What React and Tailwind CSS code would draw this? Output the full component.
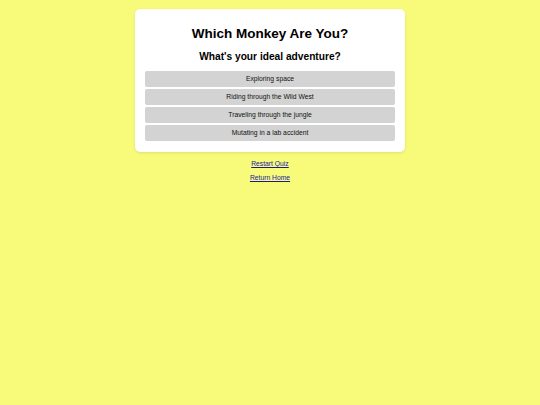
export default function App() {
  const options = [
    "Exploring space",
    "Riding through the Wild West",
    "Traveling through the jungle",
    "Mutating in a lab accident",
  ];
  return (
    <div className="min-h-[405px] w-full bg-[#f7fb79] flex flex-col items-center pt-[9px]" style={{ fontFamily: '"Liberation Sans", Arial, sans-serif' }}>
      <div className="w-[270px] bg-white rounded-[5px] shadow-[0_1px_3px_rgba(0,0,0,0.1)] px-[10px] pt-[17px] pb-[11px] flex flex-col items-center">
        <h1 className="text-[13.5px] font-bold leading-[16px] text-black">Which Monkey Are You?</h1>
        <h2 className="text-[10.2px] font-bold leading-[12px] text-black mt-[9px] mb-[8px]">What's your ideal adventure?</h2>
        <div className="w-full flex flex-col gap-[2px]">
          {options.map((o) => (
            <button key={o} className="w-full h-[16px] bg-[#d3d3d3] rounded-[2px] text-[6.75px] leading-[16px] text-[#111] text-center">
              {o}
            </button>
          ))}
        </div>
      </div>
      <div className="mt-[7px] flex flex-col items-center gap-[5px]">
        <a href="#" className="text-[6.75px] leading-[9px] text-[#1a1aa0] underline">Restart Quiz</a>
        <a href="#" className="text-[6.75px] leading-[9px] text-[#1a1aa0] underline">Return Home</a>
      </div>
    </div>
  );
}
